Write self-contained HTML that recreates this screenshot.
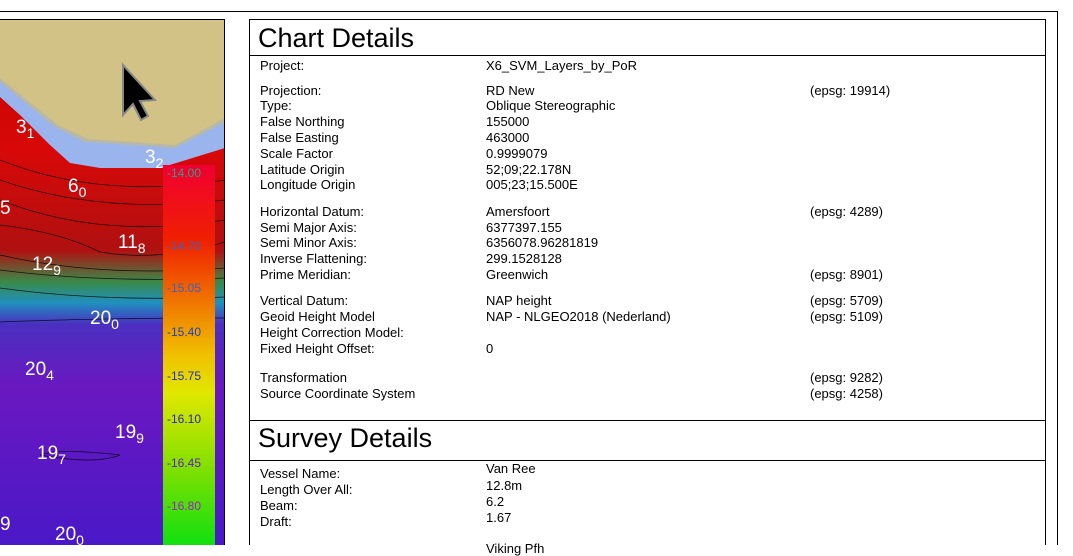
<!DOCTYPE html>
<html><head><meta charset="utf-8"><style>
html,body{margin:0;padding:0;background:#fff;}
body{width:1073px;height:545px;position:relative;overflow:hidden;font-family:"Liberation Sans",Arial,sans-serif;color:#000;}
.t{position:absolute;font-size:13px;line-height:15px;white-space:nowrap;}
.h{position:absolute;font-size:27px;line-height:30px;white-space:nowrap;}
.ln{position:absolute;background:#000;}
</style></head><body>
<div class="ln" style="left:0;top:11px;width:1058px;height:1px"></div>
<div class="ln" style="left:1057px;top:11px;width:1px;height:534px"></div>
<div class="ln" style="left:249px;top:19px;width:797px;height:1px"></div>
<div class="ln" style="left:249px;top:19px;width:1px;height:526px"></div>
<div class="ln" style="left:1045px;top:19px;width:1px;height:526px"></div>
<div class="ln" style="left:249px;top:55px;width:797px;height:1px"></div>
<div class="ln" style="left:249px;top:420px;width:797px;height:1px"></div>
<div class="ln" style="left:249px;top:460px;width:797px;height:1px"></div>

<svg style="position:absolute;left:0;top:19px" width="225" height="526" viewBox="0 19 225 526">
<defs>
<linearGradient id="sea" x1="0" y1="0" x2="0" y2="1">
<stop offset="0" stop-color="#c40000"/><stop offset="0.25" stop-color="#d80808"/>
<stop offset="0.44" stop-color="#b01010"/><stop offset="0.5" stop-color="#3a8a4a"/>
<stop offset="0.54" stop-color="#2090c0"/><stop offset="0.58" stop-color="#4a30c0"/>
<stop offset="0.7" stop-color="#6a18c0"/><stop offset="1" stop-color="#4a18c8"/>
</linearGradient>
<linearGradient id="leg" x1="0" y1="0" x2="0" y2="1">
<stop offset="0" stop-color="#f00030"/><stop offset="0.2" stop-color="#f02000"/>
<stop offset="0.35" stop-color="#f07000"/><stop offset="0.5" stop-color="#f0c000"/>
<stop offset="0.6" stop-color="#e0e800"/><stop offset="0.8" stop-color="#80e000"/>
<stop offset="1" stop-color="#10e010"/>
</linearGradient>
</defs>
<rect x="0" y="19" width="225" height="526" fill="url(#sea)"/>
<path d="M0,19 H225 V148 L160,168 L100,168 L70,163 L50,145 L20,115 L0,97 Z" fill="#9ab4ee"/>
<path d="M0,19 H225 V122 L175,148 L85,142 L55,127 L0,82 Z" fill="#b8b8a8"/>
<path d="M0,19 H225 V118 L175,145 L88,139 L58,125 L0,78 Z" fill="#d2c286"/>
<g fill="none" stroke="#000" stroke-width="0.8" opacity="0.8">
<path d="M0,160 Q100,200 225,180"/><path d="M0,180 Q100,215 225,200"/>
<path d="M0,200 Q100,240 225,220"/><path d="M0,225 Q60,232 100,252 Q160,262 225,242"/>
<path d="M0,255 Q100,278 225,268"/><path d="M0,270 Q100,283 225,278"/>
<path d="M0,288 Q100,302 225,297"/><path d="M0,322 Q100,318 225,318"/>
<path d="M40,455 Q60,448 120,455 Q95,465 40,455"/>
</g>
<g fill="#fff" font-family="Liberation Sans,Arial,sans-serif" font-size="19">
<text x="16" y="133">3<tspan font-size="14" dy="5">1</tspan></text>
<text x="145" y="163">3<tspan font-size="14" dy="5">2</tspan></text>
<text x="68" y="192">6<tspan font-size="14" dy="5">0</tspan></text>
<text x="0" y="214">5</text>
<text x="118" y="248">11<tspan font-size="14" dy="5">8</tspan></text>
<text x="32" y="270">12<tspan font-size="14" dy="5">9</tspan></text>
<text x="90" y="324">20<tspan font-size="14" dy="5">0</tspan></text>
<text x="25" y="375">20<tspan font-size="14" dy="5">4</tspan></text>
<text x="115" y="438">19<tspan font-size="14" dy="5">9</tspan></text>
<text x="37" y="459">19<tspan font-size="14" dy="5">7</tspan></text>
<text x="0" y="530">9</text>
<text x="55" y="540">20<tspan font-size="14" dy="5">0</tspan></text>
</g>
<rect x="163" y="165" width="52" height="380" fill="url(#leg)"/>
<g font-family="Liberation Sans,Arial,sans-serif" font-size="12">
<text x="167" y="177" fill="#30a090">-14.00</text>
<text x="167" y="250" fill="#4060c0">-14.70</text>
<text x="167" y="292" fill="#4060c0">-15.05</text>
<text x="167" y="336" fill="#2040c0">-15.40</text>
<text x="167" y="380" fill="#2030c0">-15.75</text>
<text x="167" y="423" fill="#3020c0">-16.10</text>
<text x="167" y="467" fill="#6020c0">-16.45</text>
<text x="167" y="510" fill="#a020c0">-16.80</text>
</g>
<path d="M123,65 L123,115 L133,104 L141,120 L148,116 L140,101 L155,100 Z" fill="#000" stroke="#888" stroke-width="2"/>
<rect x="224" y="19" width="1" height="526" fill="#000"/>
<rect x="0" y="19" width="225" height="1" fill="#000"/>
</svg>

<div class="h" style="left:258px;top:23px">Chart Details</div>
<div class="h" style="left:258px;top:423px">Survey Details</div>

<div class="t" style="left:260px;top:58px">Project:</div><div class="t" style="left:486px;top:58px">X6_SVM_Layers_by_PoR</div>
<div class="t" style="left:260px;top:83px">Projection:</div><div class="t" style="left:486px;top:83px">RD New</div><div class="t" style="left:810px;top:83px">(epsg: 19914)</div>
<div class="t" style="left:260px;top:98px">Type:</div><div class="t" style="left:486px;top:98px">Oblique Stereographic</div>
<div class="t" style="left:260px;top:114px">False Northing</div><div class="t" style="left:486px;top:114px">155000</div>
<div class="t" style="left:260px;top:130px">False Easting</div><div class="t" style="left:486px;top:130px">463000</div>
<div class="t" style="left:260px;top:146px">Scale Factor</div><div class="t" style="left:486px;top:146px">0.9999079</div>
<div class="t" style="left:260px;top:162px">Latitude Origin</div><div class="t" style="left:486px;top:162px">52;09;22.178N</div>
<div class="t" style="left:260px;top:177px">Longitude Origin</div><div class="t" style="left:486px;top:177px">005;23;15.500E</div>

<div class="t" style="left:260px;top:204px">Horizontal Datum:</div><div class="t" style="left:486px;top:204px">Amersfoort</div><div class="t" style="left:810px;top:204px">(epsg: 4289)</div>
<div class="t" style="left:260px;top:220px">Semi Major Axis:</div><div class="t" style="left:486px;top:220px">6377397.155</div>
<div class="t" style="left:260px;top:235px">Semi Minor Axis:</div><div class="t" style="left:486px;top:235px">6356078.96281819</div>
<div class="t" style="left:260px;top:251px">Inverse Flattening:</div><div class="t" style="left:486px;top:251px">299.1528128</div>
<div class="t" style="left:260px;top:267px">Prime Meridian:</div><div class="t" style="left:486px;top:267px">Greenwich</div><div class="t" style="left:810px;top:267px">(epsg: 8901)</div>

<div class="t" style="left:260px;top:293px">Vertical Datum:</div><div class="t" style="left:486px;top:293px">NAP height</div><div class="t" style="left:810px;top:293px">(epsg: 5709)</div>
<div class="t" style="left:260px;top:309px">Geoid Height Model</div><div class="t" style="left:486px;top:309px">NAP - NLGEO2018 (Nederland)</div><div class="t" style="left:810px;top:309px">(epsg: 5109)</div>
<div class="t" style="left:260px;top:325px">Height Correction Model:</div>
<div class="t" style="left:260px;top:341px">Fixed Height Offset:</div><div class="t" style="left:486px;top:341px">0</div>

<div class="t" style="left:260px;top:370px">Transformation</div><div class="t" style="left:810px;top:370px">(epsg: 9282)</div>
<div class="t" style="left:260px;top:386px">Source Coordinate System</div><div class="t" style="left:810px;top:386px">(epsg: 4258)</div>

<div class="t" style="left:260px;top:466px">Vessel Name:</div><div class="t" style="left:486px;top:461px">Van Ree</div>
<div class="t" style="left:260px;top:482px">Length Over All:</div><div class="t" style="left:486px;top:478px">12.8m</div>
<div class="t" style="left:260px;top:498px">Beam:</div><div class="t" style="left:486px;top:494px">6.2</div>
<div class="t" style="left:260px;top:514px">Draft:</div><div class="t" style="left:486px;top:510px">1.67</div>
<div class="t" style="left:486px;top:541px">Viking Pfh</div>
</body></html>
